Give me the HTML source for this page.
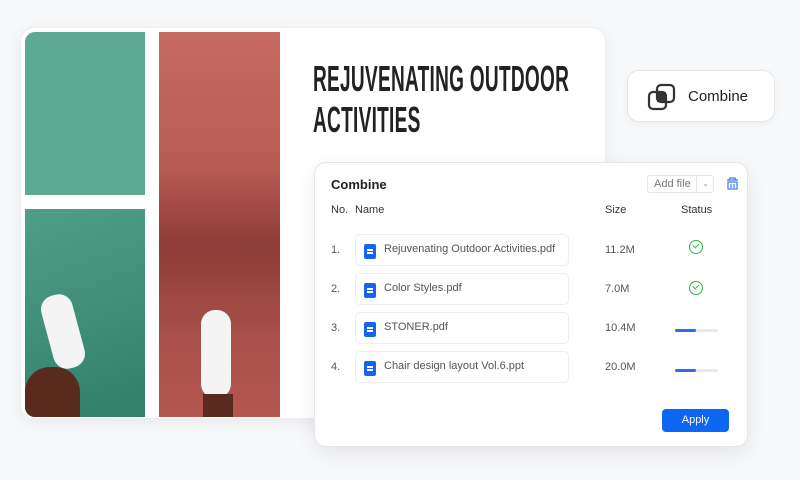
<!DOCTYPE html>
<html><head><style>
*{margin:0;padding:0;box-sizing:border-box}
body{width:800px;height:480px;background:#f7f8fa;font-family:"Liberation Sans",sans-serif;position:relative;overflow:hidden}
.card{position:absolute;left:20px;top:27px;width:586px;height:392px;background:#fff;border-radius:14px;box-shadow:0 4px 16px rgba(0,0,0,.06);border:1px solid #eceef2}
.img{position:absolute;left:25px;top:32px;width:255px;height:385px;border-radius:10px 0 0 10px;overflow:hidden;background:#fff}
.g1{position:absolute;left:0;top:0;width:120px;height:163px;background:#5ea994}
.g2{position:absolute;left:0;top:177px;width:120px;height:208px;background:linear-gradient(160deg,#4f9e88,#2f7f69)}
.r{position:absolute;left:134px;top:0;width:121px;height:385px;background:linear-gradient(180deg,#c76a62 0%,#b85b53 35%,#8e3c36 55%,#a9514a 80%,#b4564e)}
.title{position:absolute;left:313px;top:58px;font-weight:bold;font-size:36px;line-height:41px;color:#222;transform:scaleX(.53);transform-origin:left top;letter-spacing:.5px;white-space:nowrap}
.chip{position:absolute;left:627px;top:70px;width:148px;height:52px;background:#fff;border-radius:12px;border:1px solid #e6e7ea;box-shadow:0 2px 8px rgba(0,0,0,.04)}
.chip span{position:absolute;left:60px;top:17px;font-size:15px;color:#222}
.panel{position:absolute;left:314px;top:162px;width:434px;height:285px;background:#fff;border-radius:12px;border:1px solid #e3e6eb;box-shadow:0 6px 20px rgba(0,0,0,.08)}
.t{position:absolute;font-size:11px;color:#555}
.box{position:absolute;left:40px;width:214px;height:32px;border:1px solid #eceef1;border-radius:5px}
.box .ic{position:absolute;left:8px;top:9px;width:12px;height:15px;background:#1565f0;border-radius:2px}
.box .ic:after{content:"";position:absolute;left:3px;top:5px;width:6px;height:2px;background:#fff;box-shadow:0 3px 0 -0 #fff}
.box span{position:absolute;left:28px;top:8px;font-size:11px;color:#555;white-space:nowrap}
.chk{position:absolute;left:374px;width:14px;height:14px;border:1.5px solid #2fb34a;border-radius:50%}
.chk:after{content:"";position:absolute;left:3px;top:2px;width:5px;height:3px;border-left:1.5px solid #2fb34a;border-bottom:1.5px solid #2fb34a;transform:rotate(-45deg)}
.bar{position:absolute;left:360px;width:43px;height:3px;background:#e8e9ec;border-radius:2px}
.bar:before{content:"";position:absolute;left:0;top:0;width:21px;height:3px;background:#2e6ee8;border-radius:2px}
</style></head><body>
<div class="card"></div>
<div class="img"><div class="g1"></div><div class="g2"></div><div class="r"></div>
<div style="position:absolute;left:22px;top:262px;width:32px;height:75px;background:#f4f4f4;border-radius:14px;transform:rotate(-15deg)"></div>
<div style="position:absolute;left:0;top:335px;width:55px;height:50px;background:#5a2a1f;border-radius:25px 25px 0 0"></div>
<div style="position:absolute;left:176px;top:278px;width:30px;height:88px;background:#f4f4f4;border-radius:14px"></div>
<div style="position:absolute;left:178px;top:362px;width:30px;height:23px;background:#5a2a1f"></div>
</div>
<div class="title">REJUVENATING OUTDOOR<br>ACTIVITIES</div>
<div class="chip">
<svg style="position:absolute;left:19px;top:11px" width="32" height="30" viewBox="0 0 32 30"><rect x="2" y="10" width="17" height="17" rx="4" fill="none" stroke="#333" stroke-width="2.2"/><rect x="10" y="3" width="17" height="17" rx="4" fill="none" stroke="#333" stroke-width="2.2"/><rect x="10" y="10" width="9" height="10" fill="#333"/></svg>
<span>Combine</span></div>
<div class="panel">
<div class="t" style="left:16px;top:14px;font-size:13px;font-weight:bold;color:#222">Combine</div>
<div style="position:absolute;left:332px;top:12px;width:67px;height:18px;border:1px solid #e3e5e8;border-radius:3px"><span style="position:absolute;left:6px;top:2px;font-size:11px;color:#777">Add file</span><span style="position:absolute;left:48px;top:0;height:16px;border-left:1px solid #e3e5e8;width:18px;font-size:8px;color:#999;text-align:center;line-height:16px">⌄</span></div>
<svg style="position:absolute;left:411px;top:14px" width="13" height="13" viewBox="0 0 13 13"><path d="M1 3h11M3 3l1-2h5l1 2M2 5h9v7H2zM5 7v4M8 7v4" fill="none" stroke="#3b7de8" stroke-width="1.2"/></svg>
<div class="t" style="left:16px;top:41px;color:#333">No.</div>
<div class="t" style="left:40px;top:41px;color:#333">Name</div>
<div class="t" style="left:290px;top:41px;color:#333">Size</div>
<div class="t" style="left:366px;top:41px;color:#333">Status</div>
<div class="t" style="left:16px;top:81px">1.</div><div class="box" style="top:71px"><div class="ic"></div><span>Rejuvenating Outdoor Activities.pdf</span></div><div class="t" style="left:290px;top:81px">11.2M</div><div class="chk" style="top:77px"></div>
<div class="t" style="left:16px;top:120px">2.</div><div class="box" style="top:110px"><div class="ic"></div><span>Color Styles.pdf</span></div><div class="t" style="left:290px;top:120px">7.0M</div><div class="chk" style="top:118px"></div>
<div class="t" style="left:16px;top:159px">3.</div><div class="box" style="top:149px"><div class="ic"></div><span>STONER.pdf</span></div><div class="t" style="left:290px;top:159px">10.4M</div><div class="bar" style="top:166px"></div>
<div class="t" style="left:16px;top:198px">4.</div><div class="box" style="top:188px"><div class="ic"></div><span>Chair design layout Vol.6.ppt</span></div><div class="t" style="left:290px;top:198px">20.0M</div><div class="bar" style="top:206px"></div>
<div style="position:absolute;left:347px;top:246px;width:67px;height:23px;background:#0d66f2;border-radius:4px;color:#fff;font-size:11px;text-align:center;line-height:23px">Apply</div>
</div>
</body></html>
